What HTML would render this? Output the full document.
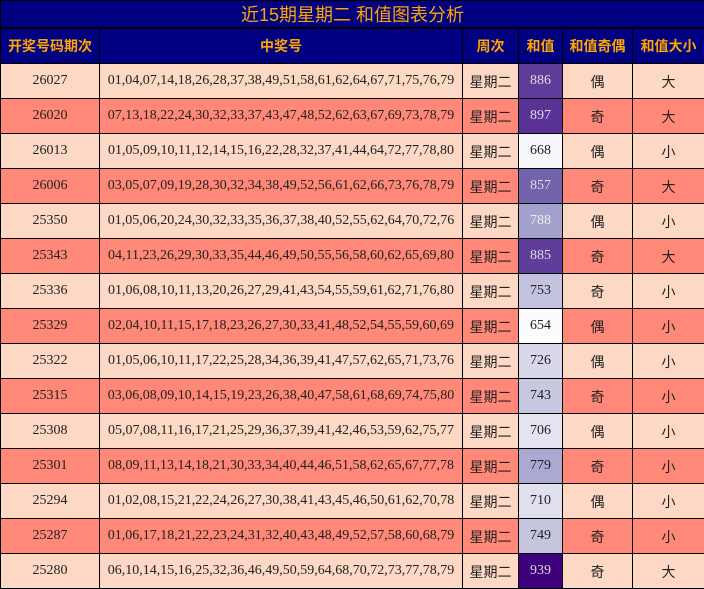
<!DOCTYPE html>
<html><head><meta charset="utf-8"><style>
body{margin:0;width:704px;height:589px;overflow:hidden;background:#fff}
table{border-collapse:collapse;table-layout:fixed;position:absolute;left:0;top:0;width:704px}
td{border:1px solid #000;padding:0;text-align:center;font-family:"Liberation Serif","Noto Sans CJK SC",serif;font-size:14px;color:#222;height:34px;white-space:nowrap;overflow:hidden}
.t td{height:26px;background:#000080;color:#FFA500;font-family:"Liberation Sans","Noto Sans CJK SC",sans-serif;font-size:18px;border-bottom:2px solid #000}
.h td{background:#000080;color:#FFA500;font-family:"Liberation Sans","Noto Sans CJK SC",sans-serif;font-weight:bold;font-size:14px}
.a td{background:#FDD8C4}
.b td{background:#FF8878}
.c{font-family:"Noto Sans CJK SC",sans-serif;font-size:14px}
.c span{position:relative;top:1px}
</style></head><body>
<table>
<colgroup><col style="width:99px"><col style="width:363px"><col style="width:56px"><col style="width:44px"><col style="width:70px"><col style="width:72px"></colgroup>
<tr class="t"><td colspan="6">近15期星期二 和值图表分析</td></tr>
<tr class="h"><td>开奖号码期次</td><td>中奖号</td><td>周次</td><td>和值</td><td>和值奇偶</td><td>和值大小</td></tr>
<tr class="a"><td>26027</td><td>01,04,07,14,18,26,28,37,38,49,51,58,61,62,64,67,71,75,76,79</td><td class="c"><span>星期二</span></td><td style="background:#5e3c99;color:#ddd">886</td><td class="c"><span>偶</span></td><td class="c"><span>大</span></td></tr>
<tr class="b"><td>26020</td><td>07,13,18,22,24,30,32,33,37,43,47,48,52,62,63,67,69,73,78,79</td><td class="c"><span>星期二</span></td><td style="background:#5a3194;color:#ddd">897</td><td class="c"><span>奇</span></td><td class="c"><span>大</span></td></tr>
<tr class="a"><td>26013</td><td>01,05,09,10,11,12,14,15,16,22,28,32,37,41,44,64,72,77,78,80</td><td class="c"><span>星期二</span></td><td style="background:#f7f6fa">668</td><td class="c"><span>偶</span></td><td class="c"><span>小</span></td></tr>
<tr class="b"><td>26006</td><td>03,05,07,09,19,28,30,32,34,38,49,52,56,61,62,66,73,76,78,79</td><td class="c"><span>星期二</span></td><td style="background:#7363ad;color:#ddd">857</td><td class="c"><span>奇</span></td><td class="c"><span>大</span></td></tr>
<tr class="a"><td>25350</td><td>01,05,06,20,24,30,32,33,35,36,37,38,40,52,55,62,64,70,72,76</td><td class="c"><span>星期二</span></td><td style="background:#a4a0cc;color:#eee">788</td><td class="c"><span>偶</span></td><td class="c"><span>小</span></td></tr>
<tr class="b"><td>25343</td><td>04,11,23,26,29,30,33,35,44,46,49,50,55,56,58,60,62,65,69,80</td><td class="c"><span>星期二</span></td><td style="background:#5f3d9a;color:#ddd">885</td><td class="c"><span>奇</span></td><td class="c"><span>大</span></td></tr>
<tr class="a"><td>25336</td><td>01,06,08,10,11,13,20,26,27,29,41,43,54,55,59,61,62,71,76,80</td><td class="c"><span>星期二</span></td><td style="background:#c3c3df">753</td><td class="c"><span>奇</span></td><td class="c"><span>小</span></td></tr>
<tr class="b"><td>25329</td><td>02,04,10,11,15,17,18,23,26,27,30,33,41,48,52,54,55,59,60,69</td><td class="c"><span>星期二</span></td><td style="background:#fcfbfd">654</td><td class="c"><span>偶</span></td><td class="c"><span>小</span></td></tr>
<tr class="a"><td>25322</td><td>01,05,06,10,11,17,22,25,28,34,36,39,41,47,57,62,65,71,73,76</td><td class="c"><span>星期二</span></td><td style="background:#d8d8ea">726</td><td class="c"><span>偶</span></td><td class="c"><span>小</span></td></tr>
<tr class="b"><td>25315</td><td>03,06,08,09,10,14,15,19,23,26,38,40,47,58,61,68,69,74,75,80</td><td class="c"><span>星期二</span></td><td style="background:#c8c8e2">743</td><td class="c"><span>奇</span></td><td class="c"><span>小</span></td></tr>
<tr class="a"><td>25308</td><td>05,07,08,11,16,17,21,25,29,36,37,39,41,42,46,53,59,62,75,77</td><td class="c"><span>星期二</span></td><td style="background:#e4e3f0">706</td><td class="c"><span>偶</span></td><td class="c"><span>小</span></td></tr>
<tr class="b"><td>25301</td><td>08,09,11,13,14,18,21,30,33,34,40,44,46,51,58,62,65,67,77,78</td><td class="c"><span>星期二</span></td><td style="background:#aba8d1">779</td><td class="c"><span>奇</span></td><td class="c"><span>小</span></td></tr>
<tr class="a"><td>25294</td><td>01,02,08,15,21,22,24,26,27,30,38,41,43,45,46,50,61,62,70,78</td><td class="c"><span>星期二</span></td><td style="background:#e1e0ef">710</td><td class="c"><span>偶</span></td><td class="c"><span>小</span></td></tr>
<tr class="b"><td>25287</td><td>01,06,17,18,21,22,23,24,31,32,40,43,48,49,52,57,58,60,68,79</td><td class="c"><span>星期二</span></td><td style="background:#c5c5e0">749</td><td class="c"><span>奇</span></td><td class="c"><span>小</span></td></tr>
<tr class="a"><td>25280</td><td>06,10,14,15,16,25,32,36,46,49,50,59,64,68,70,72,73,77,78,79</td><td class="c"><span>星期二</span></td><td style="background:#3f007d;color:#ddd">939</td><td class="c"><span>奇</span></td><td class="c"><span>大</span></td></tr>
</table>
</body></html>
